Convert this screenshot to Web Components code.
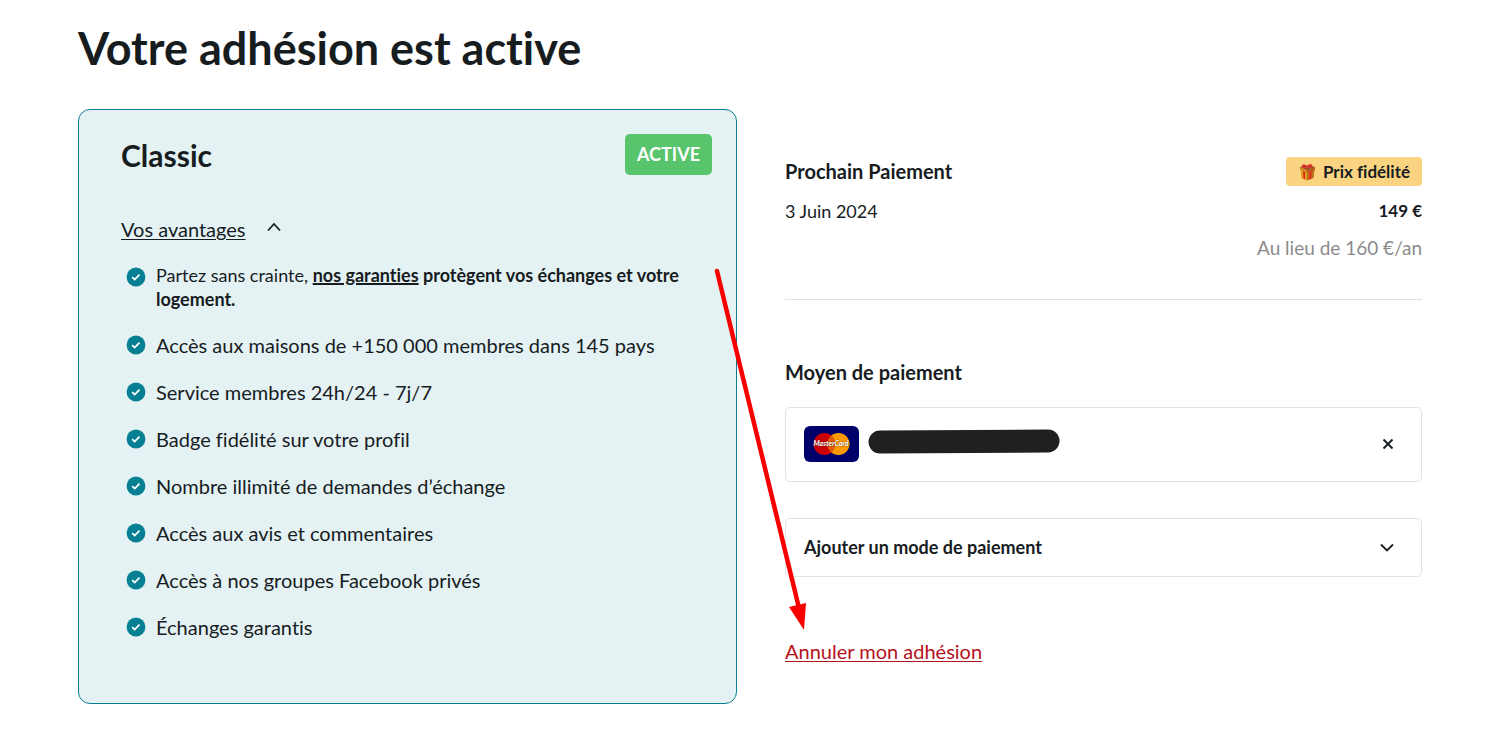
<!DOCTYPE html>
<html lang="fr">
<head>
<meta charset="utf-8">
<meta name="viewport" content="width=device-width, initial-scale=1">
<title>Votre adhésion</title>
<style>
    body {
        margin: 0;
        background: #fff;
        color: #171c1f;
        font-family: Lato, "Open Sans", sans-serif;
        font-size: 20px;
        font-variant-ligatures: none;
        line-height: 24px;
    }
</style>
</head>
<body>
<membership-page></membership-page>

<script>
class BenefitItem extends HTMLElement {
    constructor() {
        super();
        this.attachShadow({ mode: 'open' });
        this.shadowRoot.innerHTML = `
            <style>
                :host {
                    display: flex;
                    align-items: flex-start;
                    gap: 10px;
                    line-height: 25px;
                }
                :host([small]) {
                    font-size: 18px;
                    line-height: 24px;
                }
                svg {
                    flex: none;
                    width: 20px;
                    height: 20px;
                    margin-top: 2px;
                }
                :host([small]) svg {
                    margin-top: 4px;
                }
            </style>
            <svg viewBox="0 0 20 20" aria-hidden="true">
                <circle cx="10" cy="10" r="9.4" fill="#077f92"/>
                <path d="M6.2 10.2l2.5 2.4 4.8-5" fill="none" stroke="#fff" stroke-width="1.8"/>
            </svg>
            <div><slot></slot></div>
        `;
    }
}

class PlanCard extends HTMLElement {
    constructor() {
        super();
        this.attachShadow({ mode: 'open' });
    }

    connectedCallback() {
        this.shadowRoot.innerHTML = `
            <style>
                :host {
                    display: block;
                    box-sizing: border-box;
                    border: 1px solid #0b7f92;
                    border-radius: 12px;
                    background: #e4f2f4;
                    padding: 24px 24px 63px 42px;
                }
                header {
                    display: flex;
                    justify-content: space-between;
                    align-items: center;
                }
                h2 {
                    margin: 0;
                    font-size: 30px;
                    line-height: 40px;
                }
                .badge {
                    padding: 0 12px;
                    border-radius: 5px;
                    background: #58c46b;
                    color: #fff;
                    font-size: 18px;
                    font-weight: bold;
                    line-height: 41px;
                }
                button {
                    display: flex;
                    align-items: center;
                    gap: 20px;
                    margin: 42px 0 22px;
                    padding: 0;
                    border: 0;
                    background: none;
                    color: inherit;
                    font: inherit;
                    font-variant-ligatures: none;
                    cursor: pointer;
                }
                button span {
                    text-decoration: underline;
                    text-decoration-thickness: 1px;
                    text-underline-offset: 2px;
                }
                button svg {
                    width: 16px;
                    height: 16px;
                    margin-bottom: 4px;
                }
                .benefits {
                    display: grid;
                    gap: 22px;
                    padding: 0 12px 0 5px;
                }
            </style>
            <header>
                <h2>${this.getAttribute('name')}</h2>
                <span class="badge">${this.getAttribute('status')}</span>
            </header>
            <button type="button" aria-expanded="true">
                <span>Vos avantages</span>
                <svg viewBox="0 0 16 16" aria-hidden="true">
                    <path d="M2 11.5l6-6.5 6 6.5" fill="none" stroke="#171c1f" stroke-width="1.8"/>
                </svg>
            </button>
            <div class="benefits"><slot></slot></div>
        `;
    }
}

class NextPayment extends HTMLElement {
    constructor() {
        super();
        this.attachShadow({ mode: 'open' });
        this.shadowRoot.innerHTML = `
            <style>
                :host {
                    display: block;
                    border-bottom: 1px solid #e2e2e2;
                    padding-bottom: 38px;
                }
                .row {
                    display: flex;
                    justify-content: space-between;
                    align-items: center;
                }
                h3 {
                    margin: 0;
                    font-size: 20px;
                    line-height: 29px;
                }
                .tag {
                    display: flex;
                    align-items: center;
                    gap: 6px;
                    padding: 0 12px;
                    border-radius: 4px;
                    background: #fad480;
                    font-size: 17px;
                    font-weight: bold;
                    line-height: 29px;
                }
                .tag svg {
                    width: 19px;
                    height: 19px;
                }
                .amount {
                    margin: 13px 0 12px;
                    font-size: 18px;
                }
                .amount strong {
                    font-size: 17px;
                }
                .old {
                    color: #8b8b8b;
                    font-size: 19px;
                    line-height: 26px;
                    text-align: right;
                }
            </style>
            <div class="row">
                <h3>Prochain Paiement</h3>
                <span class="tag">
                    <svg viewBox="0 0 19 19" aria-hidden="true">
                        <path d="M2.500 7L9 10v8.500L3.500 16z" fill="#e09a1c"/>
                        <path d="M9 10l7.500-3-.8 9L9 18.500z" fill="#c07018"/>
                        <path d="M5 8.500l2 .8v8.300l-1.500-.8zM11.500 9.500l2.200-.8-.4 8-1.800.7z" fill="#e0281c"/>
                        <path d="M1.800 5L9 8.200v2.400L2.200 8z" fill="#d88a22"/>
                        <path d="M9 8.200L17.200 5l-.5 3L9 10.600z" fill="#b8561c"/>
                        <path d="M1.800 5L9.500 3l7.700 2L9 8.200z" fill="#8d4a22"/>
                        <path d="M9 6.500C4 6.500 2.500 3.500 5 2.500c2-.7 3.500 1 4 3.500.3-3 2.300-4.700 4.500-3.700C16 3.500 13.500 6.500 9 6.500z" fill="#ee4038"/>
                        <path d="M5.200 3.800l2.500 1.400M13 3.700l-2.300 1.500" stroke="#8c1711"/>
                    </svg>
                    Prix fidélité
                </span>
            </div>
            <div class="row amount">
                <span>3 Juin 2024</span>
                <strong>149 €</strong>
            </div>
            <div class="old">Au lieu de 160 €/an</div>
        `;
    }
}

class SavedCard extends HTMLElement {
    constructor() {
        super();
        this.attachShadow({ mode: 'open' });
        this.shadowRoot.innerHTML = `
            <style>
                :host {
                    display: flex;
                    align-items: center;
                    gap: 9px;
                    box-sizing: border-box;
                    padding: 18px 24px 19px 18px;
                    border: 1px solid #e2e2e2;
                    border-radius: 5px;
                }
                .brand {
                    flex: none;
                    width: 55px;
                    height: 36px;
                }
                .brand text {
                    font: italic bold 7px Lato, sans-serif;
                }
                .number {
                    width: 192px;
                    height: 25px;
                    margin-bottom: 5px;
                }
                button {
                    display: flex;
                    margin-left: auto;
                    padding: 0;
                    border: 0;
                    background: none;
                    cursor: pointer;
                }
                button svg {
                    width: 18px;
                    height: 18px;
                }
            </style>
            <svg class="brand" viewBox="0 0 55 36" role="img" aria-label="MasterCard">
                <rect width="55" height="36" rx="6" fill="#00006a"/>
                <circle cx="20.500" cy="18" r="11" fill="#cc0000"/>
                <circle cx="34.500" cy="18" r="11" fill="#ff9900"/>
                <path d="M27.500 9.500a11 11 0 0 1 0 17 11 11 0 0 1 0-17z" fill="#e05a00"/>
                <text x="27" y="20" text-anchor="middle" fill="#fff" stroke="#222" stroke-width="1" stroke-opacity=".4" paint-order="stroke">MasterCard</text>
            </svg>
            <svg class="number" viewBox="0 0 192 25" aria-hidden="true">
                <path d="M12 13L180 12" stroke="#202020" stroke-width="23" stroke-linecap="round"/>
            </svg>
            <button type="button" aria-label="Supprimer la carte">
                <svg viewBox="0 0 18 18"><path d="M4.500 4.500l9 9M13.500 4.500l-9 9" stroke="#171c1f" stroke-width="1.900"/></svg>
            </button>
        `;
    }
}

class AddPayment extends HTMLElement {
    constructor() {
        super();
        this.attachShadow({ mode: 'open' });
        this.shadowRoot.innerHTML = `
            <style>
                :host {
                    display: block;
                }
                button {
                    display: flex;
                    justify-content: space-between;
                    align-items: center;
                    box-sizing: border-box;
                    width: 100%;
                    padding: 16px 26px 17px 18px;
                    border: 1px solid #e2e2e2;
                    border-radius: 5px;
                    background: #fff;
                    color: inherit;
                    font: bold 18px/24px Lato, "Open Sans", sans-serif;
                    cursor: pointer;
                }
                svg {
                    width: 16px;
                    height: 16px;
                }
            </style>
            <button type="button" aria-expanded="false">
                <slot></slot>
                <svg viewBox="0 0 16 16" aria-hidden="true">
                    <path d="M2 5.500l6 6 6-6" fill="none" stroke="#171c1f" stroke-width="1.800"/>
                </svg>
            </button>
        `;
    }
}

class MembershipPage extends HTMLElement {
    constructor() {
        super();
        this.attachShadow({ mode: 'open' });
        this.shadowRoot.innerHTML = `
            <style>
                :host {
                    display: block;
                    position: relative;
                    padding: 20px 67px 25px 78px;
                }
                h1 {
                    margin: 0 0 33px;
                    font-size: 45px;
                    line-height: 56px;
                }
                .columns {
                    display: grid;
                    grid-template-columns: 659fr 637fr;
                    gap: 48px;
                }
                .payment {
                    padding-top: 48px;
                }
                h3 {
                    margin: 60px 0 23px;
                    font-size: 20px;
                    line-height: 24px;
                }
                saved-card {
                    margin-bottom: 36px;
                }
                .cancel {
                    display: inline-block;
                    margin-top: 62px;
                    color: #b5121b;
                    text-decoration-thickness: 1px;
                    text-underline-offset: 2px;
                }
                .benefit-link {
                    color: inherit;
                    text-decoration-thickness: 2px;
                }
                .arrow {
                    position: absolute;
                    top: 260px;
                    left: 705px;
                    width: 110px;
                    height: 380px;
                    pointer-events: none;
                }
            </style>
            <h1>Votre adhésion est active</h1>
            <div class="columns">
                <plan-card name="Classic" status="ACTIVE">
                    <benefit-item small>Partez sans crainte, <strong><a class="benefit-link" href="#garanties">nos garanties</a> protègent vos échanges et votre logement.</strong></benefit-item>
                    <benefit-item>Accès aux maisons de +150 000 membres dans 145 pays</benefit-item>
                    <benefit-item>Service membres 24h/24 - 7j/7</benefit-item>
                    <benefit-item>Badge fidélité sur votre profil</benefit-item>
                    <benefit-item>Nombre illimité de demandes d’échange</benefit-item>
                    <benefit-item>Accès aux avis et commentaires</benefit-item>
                    <benefit-item>Accès à nos groupes Facebook privés</benefit-item>
                    <benefit-item>Échanges garantis</benefit-item>
                </plan-card>
                <div class="payment">
                    <next-payment></next-payment>
                    <h3>Moyen de paiement</h3>
                    <saved-card></saved-card>
                    <add-payment>Ajouter un mode de paiement</add-payment>
                    <a class="cancel" href="#annuler">Annuler mon adhésion</a>
                </div>
            </div>
            <svg class="arrow" viewBox="0 0 110 380" aria-hidden="true">
                <path d="M12 11L94 348" stroke="#f90000" stroke-width="4.500" stroke-linecap="round"/>
                <path d="M84 347L101 343 99 370z" fill="#f90000"/>
            </svg>
        `;
    }
}

customElements.define('benefit-item', BenefitItem);
customElements.define('plan-card', PlanCard);
customElements.define('next-payment', NextPayment);
customElements.define('saved-card', SavedCard);
customElements.define('add-payment', AddPayment);
customElements.define('membership-page', MembershipPage);
</script>
</body>
</html>
